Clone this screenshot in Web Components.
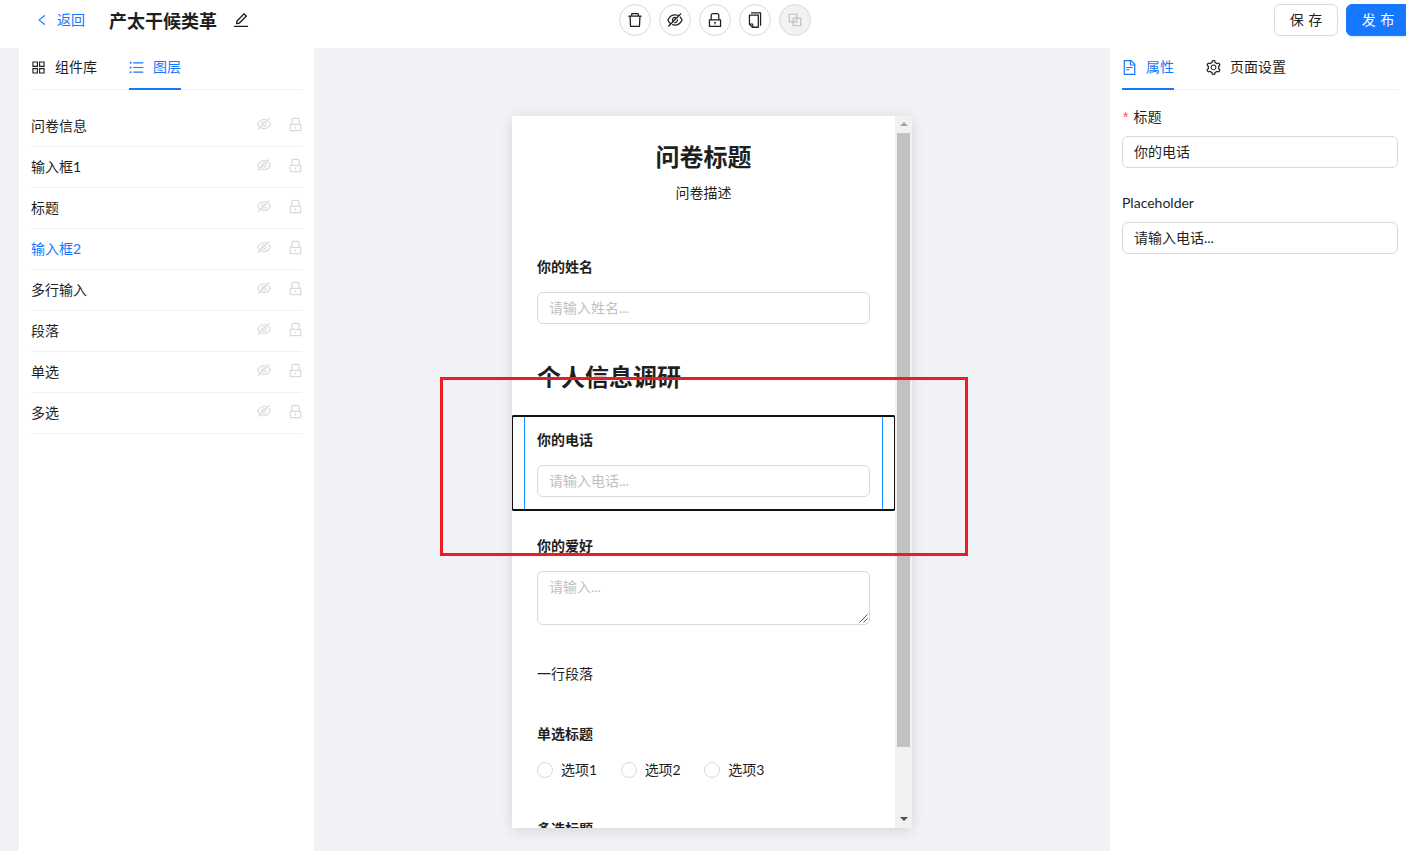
<!DOCTYPE html>
<html>
<head>
<meta charset="utf-8">
<title>问卷编辑</title>
<style>
  html, body { margin: 0; height: 100%; overflow: hidden; }
  body {
    position: relative;
    background: #f0f2f5;
    color: #1f1f1f;
    font: 14px/22px Lato, "Noto Sans CJK SC", sans-serif;
  }
</style>
</head>
<body>

<edit-page>
  <top-bar slot="top" heading="产太干候类革"></top-bar>

  <side-panel slot="left">
    <tab-strip>
      <tab-item icon="appstore">组件库</tab-item>
      <tab-item icon="bars" active>图层</tab-item>
    </tab-strip>
    <layer-list>
      <layer-row>问卷信息</layer-row>
      <layer-row>输入框1</layer-row>
      <layer-row>标题</layer-row>
      <layer-row active>输入框2</layer-row>
      <layer-row>多行输入</layer-row>
      <layer-row>段落</layer-row>
      <layer-row>单选</layer-row>
      <layer-row>多选</layer-row>
    </layer-list>
  </side-panel>

  <survey-canvas slot="center">
    <survey-intro heading="问卷标题">问卷描述</survey-intro>

    <q-block>
      <q-label>你的姓名</q-label>
      <text-box placeholder>请输入姓名...</text-box>
    </q-block>

    <q-block><q-heading>个人信息调研</q-heading></q-block>

    <q-block selected>
      <q-label>你的电话</q-label>
      <text-box placeholder>请输入电话...</text-box>
    </q-block>

    <q-block>
      <q-label>你的爱好</q-label>
      <text-box placeholder multiline>请输入...</text-box>
    </q-block>

    <q-block>一行段落</q-block>

    <q-block>
      <q-label>单选标题</q-label>
      <radio-group>
        <radio-option>选项1</radio-option>
        <radio-option>选项2</radio-option>
        <radio-option>选项3</radio-option>
      </radio-group>
    </q-block>

    <q-block>
      <q-label>多选标题</q-label>
    </q-block>
  </survey-canvas>

  <side-panel slot="right" narrow>
    <tab-strip>
      <tab-item icon="file" active>属性</tab-item>
      <tab-item icon="setting">页面设置</tab-item>
    </tab-strip>
    <prop-field label="标题" required>你的电话</prop-field>
    <prop-field label="Placeholder">请输入电话...</prop-field>
  </side-panel>
</edit-page>

<mark-box></mark-box>

<script>
  const ICONS = {
    left: 'M724 218.3V141c0-6.7-7.7-10.4-12.9-6.3L260.3 486.8a31.86 31.86 0 000 50.3l450.8 352.1c5.3 4.1 12.9.4 12.9-6.3v-77.3c0-4.9-2.3-9.6-6.1-12.6l-360-281 360-281.1c3.8-3 6.1-7.7 6.1-12.6z',
    edit: 'M257.7 752c2 0 4-.2 6-.5L431.9 722c2-.4 3.9-1.3 5.3-2.8l423.9-423.9a9.96 9.96 0 000-14.1L694.9 114.9c-1.9-1.9-4.4-2.9-7.1-2.9s-5.2 1-7.1 2.9L256.8 538.8c-1.5 1.5-2.4 3.3-2.8 5.3l-29.5 168.2a33.5 33.5 0 009.4 29.8c6.6 6.4 14.9 9.9 23.8 9.9zm67.4-174.4L687.8 215l73.3 73.3-362.7 362.6-88.9 15.7 15.6-89zM880 836H144c-17.7 0-32 14.3-32 32v36c0 4.4 3.6 8 8 8h784c4.4 0 8-3.6 8-8v-36c0-17.7-14.3-32-32-32z',
    delete: 'M360 184h-8c4.4 0 8-3.6 8-8v8h304v-8c0 4.4 3.6 8 8 8h-8v72h72v-80c0-35.3-28.7-64-64-64H352c-35.3 0-64 28.7-64 64v80h72v-72zm504 72H160c-17.7 0-32 14.3-32 32v32c0 4.4 3.6 8 8 8h60.4l24.7 523c1.6 34.1 29.8 61 63.9 61h454c34.2 0 62.3-26.8 63.9-61l24.7-523H888c4.4 0 8-3.6 8-8v-32c0-17.7-14.3-32-32-32zM731.3 840H292.7l-24.2-512h487l-24.2 512z',
    eye: 'M942.2 486.2Q889.47 375.11 816.7 305l-50.88 50.88C807.31 395.53 843.45 447.4 874.7 512 791.5 684.2 673.4 766 512 766q-72.67 0-133.87-22.38L323 798.75Q408 838 512 838q288.3 0 430.2-300.3a60.29 60.29 0 000-51.5zm-63.57-320.64L836 122.88a8 8 0 00-11.32 0L715.31 232.2Q624.86 186 512 186q-288.3 0-430.2 300.3a60.3 60.3 0 000 51.5q56.69 119.4 136.5 191.41L112.48 835a8 8 0 000 11.31L155.17 889a8 8 0 0011.31 0l712.15-712.12a8 8 0 000-11.32zM149.3 512C232.6 339.8 350.7 258 512 258c54.54 0 104.13 9.36 149.12 28.39l-70.3 70.3a176 176 0 00-238.13 238.13l-83.42 83.42C223.1 637.49 183.3 582.28 149.3 512zm246.7 0a112.11 112.11 0 01146.2-106.69L401.31 546.2A112 112 0 01396 512zM508 624c-3.46 0-6.87-.16-10.25-.47l-52.82 52.82a176.09 176.09 0 00227.42-227.42l-52.82 52.82c.31 3.38.47 6.79.47 10.25a111.94 111.94 0 01-112 112z',
    lock: 'M832 464h-68V240c0-70.7-57.3-128-128-128H388c-70.7 0-128 57.3-128 128v224h-68c-17.7 0-32 14.3-32 32v384c0 17.7 14.3 32 32 32h640c17.7 0 32-14.3 32-32V496c0-17.7-14.3-32-32-32zM332 240c0-30.9 25.1-56 56-56h248c30.9 0 56 25.1 56 56v224H332V240zm460 600H232V536h560v304zM484 701v53c0 4.4 3.6 8 8 8h40c4.4 0 8-3.6 8-8v-53a48.01 48.01 0 10-56 0z',
    copy: 'M832 64H296c-4.4 0-8 3.6-8 8v56c0 4.4 3.6 8 8 8h496v688c0 4.4 3.6 8 8 8h56c4.4 0 8-3.6 8-8V96c0-17.7-14.3-32-32-32zM704 192H192c-17.7 0-32 14.3-32 32v530.7c0 8.5 3.4 16.6 9.4 22.6l173.3 173.3c2.2 2.2 4.7 4 7.4 5.5v1.9h4.2c3.5 1.3 7.2 2 11 2H704c17.7 0 32-14.3 32-32V224c0-17.7-14.3-32-32-32zM350 856.2L263.9 770H350v86.2zM664 888H414V746c0-22.1-17.9-40-40-40H232V264h432v624z',
    block: 'M856 376H648V168c0-8.8-7.2-16-16-16H168c-8.8 0-16 7.2-16 16v464c0 8.8 7.2 16 16 16h208v208c0 8.8 7.2 16 16 16h464c8.8 0 16-7.2 16-16V392c0-8.8-7.2-16-16-16zm-480 16v188H220V220h360v156H392c-8.8 0-16 7.2-16 16zm204 52v136H444V444h136zm224 360H444V648h188c8.8 0 16-7.2 16-16V444h156v360z',
    appstore: 'M464 144H160c-8.8 0-16 7.2-16 16v304c0 8.8 7.2 16 16 16h304c8.8 0 16-7.2 16-16V160c0-8.8-7.2-16-16-16zm-52 268H212V212h200v200zm452-268H560c-8.8 0-16 7.2-16 16v304c0 8.8 7.2 16 16 16h304c8.8 0 16-7.2 16-16V160c0-8.8-7.2-16-16-16zm-52 268H612V212h200v200zM464 544H160c-8.8 0-16 7.2-16 16v304c0 8.8 7.2 16 16 16h304c8.8 0 16-7.2 16-16V560c0-8.8-7.2-16-16-16zm-52 268H212V612h200v200zm452-268H560c-8.8 0-16 7.2-16 16v304c0 8.8 7.2 16 16 16h304c8.8 0 16-7.2 16-16V560c0-8.8-7.2-16-16-16zm-52 268H612V612h200v200z',
    bars: 'M912 192H328c-4.4 0-8 3.6-8 8v56c0 4.4 3.6 8 8 8h584c4.4 0 8-3.6 8-8v-56c0-4.4-3.6-8-8-8zm0 284H328c-4.4 0-8 3.6-8 8v56c0 4.4 3.6 8 8 8h584c4.4 0 8-3.6 8-8v-56c0-4.4-3.6-8-8-8zm0 284H328c-4.4 0-8 3.6-8 8v56c0 4.4 3.6 8 8 8h584c4.4 0 8-3.6 8-8v-56c0-4.4-3.6-8-8-8zM104 228a56 56 0 10112 0 56 56 0 10-112 0zm0 284a56 56 0 10112 0 56 56 0 10-112 0zm0 284a56 56 0 10112 0 56 56 0 10-112 0z',
    file: 'M854.6 288.6L639.4 73.4c-6-6-14.1-9.4-22.6-9.4H192c-17.7 0-32 14.3-32 32v832c0 17.7 14.3 32 32 32h640c17.7 0 32-14.3 32-32V311.3c0-8.5-3.4-16.7-9.4-22.7zM790.2 326H602V137.8L790.2 326zm1.8 562H232V136h302v216a42 42 0 0042 42h216v494zM504 618H320c-4.4 0-8 3.6-8 8v48c0 4.4 3.6 8 8 8h184c4.4 0 8-3.6 8-8v-48c0-4.4-3.6-8-8-8zM312 490v48c0 4.4 3.6 8 8 8h384c4.4 0 8-3.6 8-8v-48c0-4.4-3.6-8-8-8H320c-4.4 0-8 3.6-8 8z',
    setting: 'M924.8 625.7l-65.5-56c3.1-19 4.7-38.4 4.7-57.8s-1.6-38.8-4.7-57.8l65.5-56a32.03 32.03 0 009.3-35.2l-.9-2.6a443.74 443.74 0 00-79.7-137.9l-1.8-2.1a32.12 32.12 0 00-35.1-9.5l-81.3 28.9c-30-24.6-63.5-44-99.7-57.6l-15.7-85a32.05 32.05 0 00-25.8-25.7l-2.7-.5c-52.1-9.4-106.9-9.4-159 0l-2.7.5a32.05 32.05 0 00-25.8 25.7l-15.8 85.4a351.86 351.86 0 00-99 57.4l-81.9-29.1a32 32 0 00-35.1 9.5l-1.8 2.1a446.02 446.02 0 00-79.7 137.9l-.9 2.6c-4.5 12.5-.8 26.5 9.3 35.2l66.3 56.6c-3.1 18.8-4.6 38-4.6 57.1 0 19.2 1.5 38.4 4.6 57.1L99 625.5a32.03 32.03 0 00-9.3 35.2l.9 2.6c18.1 50.4 44.9 96.9 79.7 137.9l1.8 2.1a32.12 32.12 0 0035.1 9.5l81.9-29.1c29.8 24.5 63.1 43.9 99 57.4l15.8 85.4a32.05 32.05 0 0025.8 25.7l2.7.5a449.4 449.4 0 00159 0l2.7-.5a32.05 32.05 0 0025.8-25.7l15.7-85a350 350 0 0099.7-57.6l81.3 28.9a32 32 0 0035.1-9.5l1.8-2.1c34.8-41.1 61.6-87.5 79.7-137.9l.9-2.6c4.5-12.3.8-26.3-9.3-35zM788.3 465.9c2.5 15.1 3.8 30.6 3.8 46.1s-1.3 31-3.8 46.1l-6.6 40.1 74.7 63.9a370.03 370.03 0 01-42.6 73.6L721 702.8l-31.4 25.8c-23.9 19.6-50.5 35-79.3 45.8l-38.1 14.3-17.9 97a377.5 377.5 0 01-85 0l-17.9-97.2-37.8-14.5c-28.5-10.8-55-26.2-78.7-45.7l-31.4-25.9-93.4 33.2c-17-22.9-31.2-47.6-42.6-73.6l75.5-64.5-6.5-40c-2.4-14.9-3.7-30.3-3.7-45.5 0-15.3 1.2-30.6 3.7-45.5l6.5-40-75.5-64.5c11.3-26.1 25.6-50.7 42.6-73.6l93.4 33.2 31.4-25.9c23.7-19.5 50.2-34.9 78.7-45.7l37.9-14.3 17.9-97.2c28.1-3.2 56.8-3.2 85 0l17.9 97 38.1 14.3c28.7 10.8 55.4 26.2 79.3 45.8l31.4 25.8 92.8-32.9c17 22.9 31.2 47.6 42.6 73.6L781.8 426l6.5 39.9zM512 326c-97.2 0-176 78.8-176 176s78.8 176 176 176 176-78.8 176-176-78.8-176-176-176zm79.2 255.2A111.6 111.6 0 01512 614c-29.9 0-58-11.7-79.2-32.8A111.6 111.6 0 01400 502c0-29.9 11.7-58 32.8-79.2C454 401.6 482.1 390 512 390c29.9 0 58 11.6 79.2 32.8A111.6 111.6 0 01624 502c0 29.9-11.7 58-32.8 79.2z'
  };

  // small base so every element only has to hand over its html
  class ShadowEl extends HTMLElement {
    constructor() {
      super();
      this.attachShadow({ mode: 'open' });
    }
    connectedCallback() {
      this.shadowRoot.innerHTML = this.template();
    }
  }

  class UiIcon extends ShadowEl {
    template() {
      const size = this.getAttribute('size') || 14;
      const d = ICONS[this.getAttribute('name')];
      return `<style>
        :host { display: inline-flex; flex: none; width: ${size}px; height: ${size}px; }
        svg { width: 100%; height: 100%; fill: currentColor; display: block; }
      </style><svg viewBox="0 0 1024 1024"><path d="${d}"/></svg>`;
    }
  }

  class EditPage extends ShadowEl {
    template() {
      return `<style>
        :host { display: flex; flex-direction: column; height: 851px; }
        .body { flex: 1; display: flex; min-height: 0; padding-left: 19px; }
        .center { flex: 1; display: flex; justify-content: center; align-items: flex-start; padding-top: 68px; }
      </style>
      <slot name="top"></slot>
      <div class="body">
        <slot name="left"></slot>
        <div class="center"><slot name="center"></slot></div>
        <slot name="right"></slot>
      </div>`;
    }
  }

  class TopBar extends ShadowEl {
    template() {
      const tools = [['delete'], ['eye'], ['lock'], ['copy'], ['block', true]];
      return `<style>
        :host {
          display: grid; grid-template-columns: 1fr auto 1fr; align-items: center;
          height: 48px; padding: 0 0 8px 24px; box-sizing: border-box;
          background: #fff;
        }
        .left { display: flex; align-items: center; }
        .back { display: flex; align-items: center; gap: 8px; margin-left: 11px; color: #1677ff; }
        h1 { margin: 2px 0 0 24px; font-size: 18px; line-height: 24px; font-weight: 700; color: #1f1f1f; }
        .pen { margin-left: 15px; color: #1f1f1f; display: flex; }
        .tools { display: flex; gap: 8px; }
        .right { display: flex; justify-content: flex-end; gap: 8px; margin-right: -4px; }
        button {
          font: inherit; width: 64px; height: 32px; padding: 0; border-radius: 6px; box-sizing: border-box;
          word-spacing: 1px;
          border: 1px solid #d9d9d9; background: #fff; color: #1f1f1f;
        }
        button.primary { background: #1677ff; border-color: #1677ff; color: #fff; box-shadow: 0 2px 0 rgba(5,145,255,.1); }
      </style>
      <div class="left">
        <span class="back"><ui-icon name="left" size="14"></ui-icon><span>返回</span></span>
        <h1>${this.getAttribute('heading')}</h1>
        <span class="pen"><ui-icon name="edit" size="18"></ui-icon></span>
      </div>
      <div class="tools">
        ${tools.map(t => `<round-button icon="${t[0]}"${t[1] ? ' disabled' : ''}></round-button>`).join('')}
      </div>
      <div class="right">
        <button>保 存</button>
        <button class="primary">发 布</button>
      </div>`;
    }
  }

  class RoundButton extends ShadowEl {
    template() {
      const off = this.hasAttribute('disabled');
      return `<style>
        :host {
          display: flex; align-items: center; justify-content: center;
          width: 32px; height: 32px; box-sizing: border-box; border-radius: 50%;
          border: 1px solid #d9d9d9;
          background: ${off ? '#f2f2f2' : '#fff'};
          color: ${off ? '#bfbfbf' : '#1f1f1f'};
        }
      </style><ui-icon name="${this.getAttribute('icon')}" size="18"></ui-icon>`;
    }
  }

  class SidePanel extends ShadowEl {
    template() {
      const narrow = this.hasAttribute('narrow');
      return `<style>
        :host {
          display: block; box-sizing: border-box; height: 100%; background: #fff;
          width: ${narrow ? 296 : 295}px; padding: 0 ${narrow ? 8 : 12}px 0 12px;
        }
      </style><slot></slot>`;
    }
  }

  class TabStrip extends ShadowEl {
    template() {
      return `<style>
        :host { display: flex; gap: 32px; height: 42px; border-bottom: 1px solid #f0f0f0; box-sizing: border-box; }
      </style><slot></slot>`;
    }
  }

  class TabItem extends ShadowEl {
    template() {
      const on = this.hasAttribute('active');
      return `<style>
        :host {
          display: flex; align-items: center; gap: 8px; height: 42px; box-sizing: border-box;
          padding-top: 1px; padding-bottom: 3px;
          color: ${on ? '#1677ff' : '#1f1f1f'};
          border-bottom: 2px solid ${on ? '#1677ff' : 'transparent'};
        }
        ui-icon { margin-left: -1px; }
      </style><ui-icon name="${this.getAttribute('icon')}" size="17"></ui-icon><slot></slot>`;
    }
  }

  class LayerList extends ShadowEl {
    template() {
      return `<style>:host { display: block; margin-top: 16px; }</style><slot></slot>`;
    }
  }

  class LayerRow extends ShadowEl {
    template() {
      const on = this.hasAttribute('active');
      return `<style>
        :host {
          display: flex; align-items: center; height: 41px; box-sizing: border-box;
          border-bottom: 1px solid #f0f0f0;
          color: ${on ? '#1677ff' : '#1f1f1f'};
        }
        .name { flex: 1; }
        .acts { display: flex; align-items: center; gap: 15px; margin: -4px -2px 0 0; color: #d9d9d9; }
      </style>
      <span class="name"><slot></slot></span>
      <span class="acts"><ui-icon name="eye" size="16"></ui-icon><ui-icon name="lock" size="17"></ui-icon></span>`;
    }
  }

  class SurveyCanvas extends ShadowEl {
    template() {
      return `<style>
        :host {
          display: flex; width: 400px; height: 712px; background: #fff;
          box-shadow: 0 2px 12px rgba(0,0,0,.12);
        }
        .content { flex: 1; min-width: 0; overflow: hidden; padding-top: 12px; box-sizing: border-box; }
        .bar { flex: none; width: 17px; background: #f1f1f1; display: flex; flex-direction: column; align-items: center; }
        .btn { flex: none; height: 17px; display: flex; align-items: center; justify-content: center; }
        .btn i { width: 0; height: 0; border: 4px solid transparent; margin-bottom: 2px; }
        .up i { border-top: 0; border-bottom: 4px solid #a3a3a3; }
        .down i { border-bottom: 0; border-top: 4px solid #505050; }
        .thumb { flex: none; width: 13px; height: 614px; background: #c1c1c1; }
        .rest { flex: 1; }
      </style>
      <div class="content"><slot></slot></div>
      <div class="bar">
        <div class="btn up"><i></i></div>
        <div class="thumb"></div>
        <div class="rest"></div>
        <div class="btn down"><i></i></div>
      </div>`;
    }
  }

  class SurveyIntro extends ShadowEl {
    template() {
      return `<style>
        :host { display: block; text-align: center; padding: 13px 0 38px; }
        h1 { margin: 0 0 9px; font-size: 24px; line-height: 32px; font-weight: 700; color: #1f1f1f; }
        p { margin: 0; }
      </style>
      <h1>${this.getAttribute('heading')}</h1>
      <p><slot></slot></p>`;
    }
  }

  class QBlock extends ShadowEl {
    template() {
      const on = this.hasAttribute('selected');
      return `<style>
        :host {
          display: flow-root; margin-bottom: ${on ? 10 : 11}px; border-radius: 2px;
          ${on ? 'box-shadow: inset 0 2px 0 #111, inset 0 -2px 0 #111, inset 1px 0 0 #111, inset -1px 0 0 #111;' : ''}
        }
        .inner {
          margin: ${on ? '2px' : '0'} 12px; padding: ${on ? '12px' : '14px'} 12px ${on ? '12px' : '13px'};
          border-left: 1px solid ${on ? '#1890ff' : 'transparent'};
          border-right: 1px solid ${on ? '#1890ff' : 'transparent'};
        }
      </style><div class="inner"><slot></slot></div>`;
    }
  }

  class QLabel extends ShadowEl {
    template() {
      return `<style>:host { display: block; margin-bottom: 14px; font-weight: 700; color: #1f1f1f; }</style><slot></slot>`;
    }
  }

  class QHeading extends ShadowEl {
    template() {
      return `<style>:host { display: block; margin-bottom: -1px; font-size: 24px; line-height: 30px; font-weight: 700; color: #1f1f1f; }</style><slot></slot>`;
    }
  }

  class TextBox extends ShadowEl {
    template() {
      const multi = this.hasAttribute('multiline');
      return `<style>
        :host {
          display: block; position: relative; box-sizing: border-box;
          height: ${multi ? 54 : 32}px; padding: 4px 11px;
          border: 1px solid #d9d9d9; border-radius: 6px; background: #fff;
          color: ${this.hasAttribute('placeholder') ? '#bfbfbf' : '#1f1f1f'};
        }
        svg { position: absolute; right: 1px; bottom: 1px; width: 9px; height: 9px; }
      </style><slot></slot>${multi ? '<svg viewBox="0 0 9 9"><path d="M0.5 8.5L8.5 0.5M4.5 8.5L8.5 4.5" stroke="#555" fill="none"/></svg>' : ''}`;
    }
  }

  class RadioGroup extends ShadowEl {
    template() {
      return `<style>:host { display: flex; gap: 23.5px; height: 22px; margin-bottom: -1px; align-items: center; }</style><slot></slot>`;
    }
  }

  class RadioOption extends ShadowEl {
    template() {
      return `<style>
        :host { display: flex; align-items: center; gap: 8px; }
        i { width: 16px; height: 16px; box-sizing: border-box; border: 1px solid #d9d9d9; border-radius: 50%; background: #fff; }
      </style><i></i><span><slot></slot></span>`;
    }
  }

  class PropField extends ShadowEl {
    template() {
      const req = this.hasAttribute('required');
      return `<style>
        :host { display: block; padding-top: 16px; margin-bottom: 8px; }
        .lab { display: flex; align-items: center; height: 22px; margin-bottom: 8px; color: #1f1f1f; }
        .star { color: #ff4d4f; margin: 0 5px 0 1px; font-family: "Liberation Sans", sans-serif; }
        .box {
          box-sizing: border-box; height: 32px; padding: 4px 11px;
          border: 1px solid #d9d9d9; border-radius: 6px; color: #1f1f1f;
        }
      </style>
      <div class="lab">${req ? '<span class="star">*</span>' : ''}${this.getAttribute('label')}</div>
      <div class="box"><slot></slot></div>`;
    }
  }

  // the red marker lies over the page, it is not part of the layout
  class MarkBox extends ShadowEl {
    template() {
      return `<style>
        :host {
          position: absolute; left: 440px; top: 377px; width: 528px; height: 179px;
          box-sizing: border-box; border: 3px solid #ed1c24; pointer-events: none;
        }
      </style>`;
    }
  }

  customElements.define('ui-icon', UiIcon);
  customElements.define('edit-page', EditPage);
  customElements.define('top-bar', TopBar);
  customElements.define('round-button', RoundButton);
  customElements.define('side-panel', SidePanel);
  customElements.define('tab-strip', TabStrip);
  customElements.define('tab-item', TabItem);
  customElements.define('layer-list', LayerList);
  customElements.define('layer-row', LayerRow);
  customElements.define('survey-canvas', SurveyCanvas);
  customElements.define('survey-intro', SurveyIntro);
  customElements.define('q-block', QBlock);
  customElements.define('q-label', QLabel);
  customElements.define('q-heading', QHeading);
  customElements.define('text-box', TextBox);
  customElements.define('radio-group', RadioGroup);
  customElements.define('radio-option', RadioOption);
  customElements.define('prop-field', PropField);
  customElements.define('mark-box', MarkBox);
</script>
</body>
</html>
